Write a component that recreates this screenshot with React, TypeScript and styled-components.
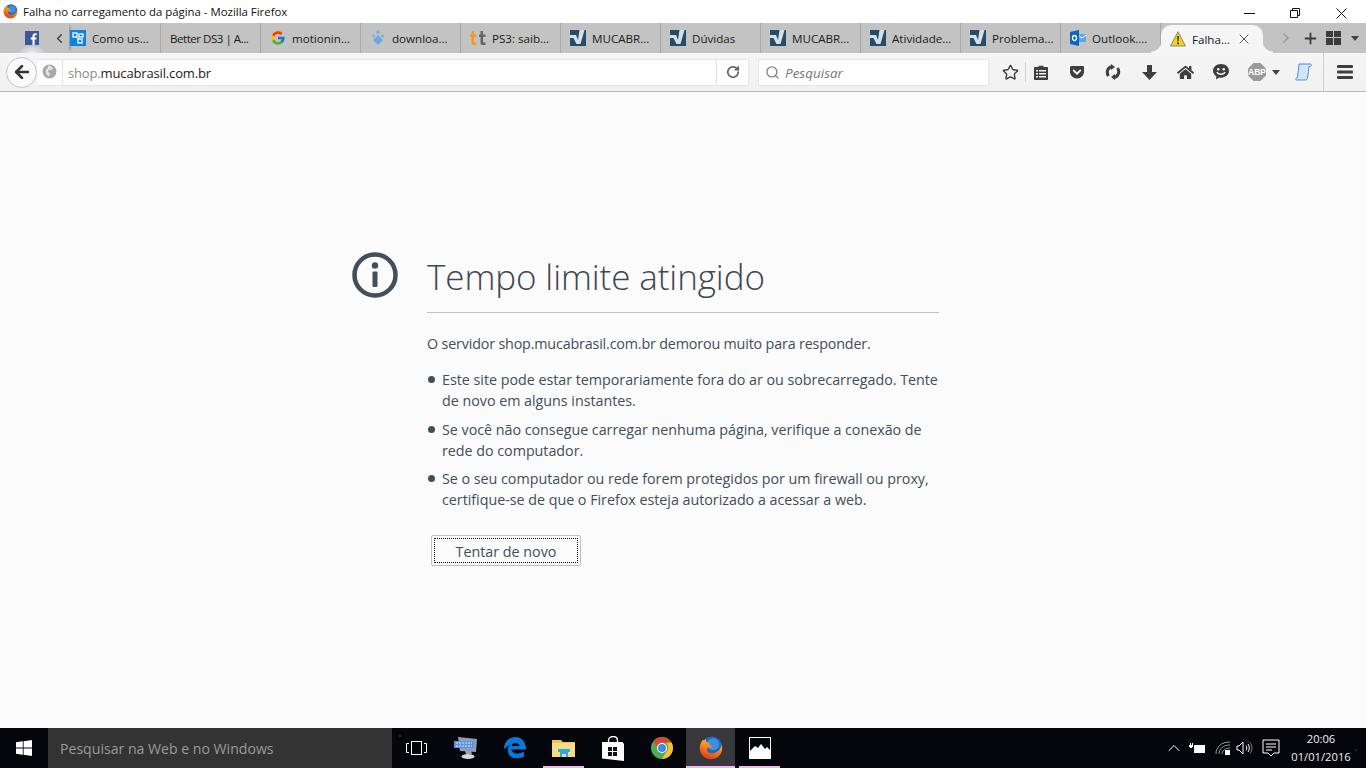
import React from "react";
import styled, { createGlobalStyle } from "styled-components";
import { ArrowLeft, ChevronLeft, ChevronRight, Plus, RotateCw, Search, Star, X, ChevronUp } from "lucide-react";
import { FcGoogle } from "react-icons/fc";
import { FaGetPocket, FaHome } from "react-icons/fa";

const Global = createGlobalStyle`
  html, body { margin: 0; padding: 0; height: 100%; overflow: hidden; }
  body { font-family: "Open Sans", "Noto Sans", sans-serif; color: #222; background: #fbfbfb; }
  #root { height: 100%; }
`;

const Page = styled.div`
  display: flex;
  flex-direction: column;
  height: 768px;
  width: 1366px;
`;

const TitleBar = styled.div`
  display: flex;
  align-items: center;
  height: 23px;
  background: #fff;
  padding-left: 3px;
  flex-shrink: 0;
`;

const TitleText = styled.span`
  margin-left: 5px;
  font-size: 11.4px;
  color: #111;
  flex: 1;
  white-space: nowrap;
`;

const WindowButtons = styled.div`
  display: flex;
  height: 23px;
  padding-top: 3px;
  padding-right: 2px;
  box-sizing: border-box;
`;

const WindowButton = styled.div`
  width: 46px;
  display: flex;
  align-items: center;
  justify-content: center;
`;

const TabStrip = styled.div`
  display: flex;
  align-items: stretch;
  height: 30px;
  background: #c3c3c3;
  flex-shrink: 0;
`;

const PinnedTab = styled.div`
  width: 50px;
  padding-left: 25px;
  box-sizing: border-box;
  display: flex;
  align-items: center;
  background: radial-gradient(ellipse 14px 8px at 32px 30px, #e8f0fb, transparent);
`;

const Chevron = styled.div`
  width: 19px;
  display: flex;
  align-items: center;
  justify-content: center;
  box-shadow: 3px 0 3px -3px #555;
  color: #444;
`;

const Tab = styled.div<{ $first?: boolean; $tight?: boolean }>`
  width: ${p => (p.$first ? "92px" : "100px")};
  box-sizing: border-box;
  display: flex;
  align-items: center;
  gap: 6px;
  padding-left: ${p => (p.$first ? "1px" : "9px")};
  font-size: 11.6px;
  letter-spacing: ${p => (p.$tight ? "-0.5px" : "0")};
  color: #1a1a1a;
  white-space: nowrap;
  border-right: 1px solid #a9a9a9;
`;

const ActiveTab = styled.div`
  width: 102px;
  margin-top: 2px;
  box-sizing: border-box;
  display: flex;
  align-items: center;
  gap: 6px;
  padding-left: 9px;
  font-size: 11.6px;
  color: #1a1a1a;
  white-space: nowrap;
  background: #f5f5f5;
  border-radius: 10px 10px 0 0;
  position: relative;
  &::before, &::after {
    content: "";
    position: absolute;
    bottom: 0;
    width: 10px;
    height: 12px;
  }
  &::before {
    left: -10px;
    background: radial-gradient(circle at 0 0, transparent 10px, #f5f5f5 11px);
  }
  &::after {
    right: -10px;
    background: radial-gradient(circle at 100% 0, transparent 10px, #f5f5f5 11px);
  }
`;

const TabIcon = styled.span`
  width: 16px;
  height: 16px;
  flex-shrink: 0;
  display: flex;
  align-items: center;
  justify-content: center;
`;

const TabClose = styled.span`
  position: absolute;
  right: 11px;
  top: 6px;
  display: flex;
`;

const StripActions = styled.div`
  display: flex;
  align-items: center;
  flex: 1;
`;

const StripChevron = styled.div`
  margin-left: 14px;
  width: 18px;
  display: flex;
  justify-content: center;
  color: #9b9b9b;
`;

const StripPlus = styled.div`
  width: 30px;
  display: flex;
  justify-content: center;
  color: #3c3c3c;
`;

const StripGroups = styled.div`
  margin-left: 1px;
  display: flex;
`;

const StripCaret = styled.div`
  margin-left: 10px;
  display: flex;
`;

const NavBar = styled.div`
  display: flex;
  align-items: center;
  height: 39px;
  padding-left: 6px;
  box-sizing: border-box;
  background: linear-gradient(#f5f5f5, #f1f1f1);
  border-bottom: 1px solid #bcbcbc;
  flex-shrink: 0;
`;

const BackButton = styled.div`
  width: 31px;
  height: 31px;
  box-sizing: border-box;
  border-radius: 50%;
  border: 1px solid #c4c4c4;
  background: #fafafa;
  display: flex;
  align-items: center;
  justify-content: center;
  position: relative;
  z-index: 1;
  flex-shrink: 0;
`;

const UrlBar = styled.div`
  display: flex;
  align-items: center;
  width: 712px;
  height: 27px;
  box-sizing: border-box;
  background: #fff;
  border: 1px solid #e6e6e6;
  border-left: 0;
  padding-left: 4px;
`;

const Globe = styled.span`
  width: 17px;
  height: 16px;
  margin-right: 4px;
  display: flex;
  justify-content: center;
`;

const UrlText = styled.div`
  flex: 1;
  border-left: 1px solid #e2e2e2;
  height: 25px;
  line-height: 26px;
  padding-left: 5px;
  font-size: 13px;
  letter-spacing: -0.15px;
  color: #222;
  span { color: #8a8a8a; }
`;

const Reload = styled.div`
  width: 31px;
  height: 25px;
  border-left: 1px solid #e2e2e2;
  display: flex;
  align-items: center;
  justify-content: center;
`;

const SearchBox = styled.div`
  display: flex;
  align-items: center;
  width: 231px;
  height: 27px;
  box-sizing: border-box;
  margin-left: 9px;
  background: #fff;
  border: 1px solid #e6e6e6;
  padding-left: 6px;
  gap: 5px;
  font-size: 13.5px;
  font-style: italic;
  color: #777;
`;

const SearchLabel = styled.span`
  position: relative;
  top: 1px;
`;

const ToolSlot = styled.div<{ $w?: number; $before?: number }>`
  width: ${p => p.$w ?? 36}px;
  margin-left: ${p => p.$before ?? 0}px;
  height: 24px;
  display: flex;
  align-items: center;
  justify-content: center;
  flex-shrink: 0;
`;

const ToolSep = styled.div<{ $h?: number; $before?: number }>`
  width: 1px;
  height: ${p => p.$h ?? 20}px;
  margin-left: ${p => p.$before ?? 0}px;
  background: #d0d0d0;
  flex-shrink: 0;
`;

const AbpSlot = styled(ToolSlot)`
  justify-content: flex-start;
  padding-left: 9px;
  gap: 6px;
  box-sizing: border-box;
`;

const Content = styled.main`
  flex: 1;
  background: #fbfbfb;
  color: #424e5a;
  display: flex;
  justify-content: center;
  padding-top: 159px;
  box-sizing: border-box;
`;

const ErrorBox = styled.div`
  width: 512px;
`;

const Heading = styled.div`
  display: flex;
  align-items: center;
  height: 61px;
  border-bottom: 1px solid #c1c1c1;
`;

const InfoSlot = styled.div`
  width: 75px;
  margin-left: -75px;
  margin-top: -9px;
  flex-shrink: 0;
`;

const Title = styled.h1`
  margin: -11px 0 0;
  font-weight: 300;
  font-size: 35px;
  letter-spacing: -0.1px;
  color: #3e4650;
  white-space: nowrap;
`;

const Lead = styled.p`
  margin: 20px 0 0;
  font-size: 14.3px;
  letter-spacing: -0.16px;
  line-height: 21px;
  white-space: nowrap;
`;

const Hints = styled.ul`
  list-style: none;
  margin: 15px 0 0;
  padding: 0;
`;

const Hint = styled.li`
  position: relative;
  padding-left: 15px;
  margin-bottom: 7px;
  font-size: 14.3px;
  letter-spacing: -0.02px;
  line-height: 21px;
  white-space: nowrap;
  &:first-child { margin-bottom: 8px; }
  &::before {
    content: "";
    position: absolute;
    left: 1px;
    top: 7px;
    width: 7px;
    height: 7px;
    border-radius: 50%;
    background: #424e5a;
  }
`;

const RetryButton = styled.button`
  display: block;
  margin: 25px 0 0 4px;
  width: 150px;
  height: 31px;
  box-sizing: border-box;
  padding: 2px;
  background: #fbfbfb;
  border: 1px solid #c1c1c1;
  border-radius: 2px;
  font-family: inherit;
  font-size: 14.3px;
  color: #424e5a;
`;

const RetryInner = styled.span`
  display: block;
  height: 100%;
  line-height: 26px;
  border: 1px dotted #111;
  box-sizing: border-box;
`;

const Taskbar = styled.footer`
  display: flex;
  align-items: stretch;
  height: 40px;
  background:
    radial-gradient(circle at 400px 8px, #2a2a34 0, transparent 2px),
    radial-gradient(circle at 1248px 14px, #2a2a34 0, transparent 2px),
    radial-gradient(circle at 1356px 22px, #2a2a34 0, transparent 2px),
    #05050c;
  color: #fff;
  flex-shrink: 0;
`;

const StartButton = styled.div`
  width: 48px;
  display: flex;
  align-items: center;
  justify-content: center;
`;

const TaskSearch = styled.div`
  width: 344px;
  background: #333;
  display: flex;
  align-items: center;
  padding-left: 12px;
  box-sizing: border-box;
  font-size: 14.1px;
  color: #9a9a9a;
`;

const TaskIcon = styled.div<{ $running?: boolean; $active?: boolean }>`
  width: 49px;
  display: flex;
  align-items: center;
  justify-content: center;
  position: relative;
  background: ${p => (p.$active ? "#38373c" : "transparent")};
  &::after {
    content: "";
    display: ${p => (p.$running ? "block" : "none")};
    position: absolute;
    bottom: 0;
    left: ${p => (p.$active ? 0 : 4)}px;
    right: ${p => (p.$active ? 0 : 4)}px;
    height: 2px;
    background: #eeb9ee;
  }
`;

const Tray = styled.div`
  margin-left: auto;
  display: flex;
  align-items: center;
`;

const TraySlot = styled.div<{ $w: number; $after?: number }>`
  width: ${p => p.$w}px;
  margin-right: ${p => p.$after ?? 0}px;
  display: flex;
  justify-content: center;
  align-items: center;
`;

const Clock = styled.div`
  width: 76px;
  text-align: center;
  font-size: 11.2px;
  line-height: 18px;
  color: #f0f0f0;
  margin-right: 7px;
`;

const FirefoxLogo = ({ size = 16, id }: { size?: number; id: string }) => (
  <svg width={size} height={size} viewBox="0 0 32 32">
    <defs>
      <linearGradient id={id} x1="0.7" y1="0" x2="0.3" y2="1">
        <stop offset="0" stopColor="#ffc92e" />
        <stop offset="0.45" stopColor="#f7871f" />
        <stop offset="1" stopColor="#d8391b" />
      </linearGradient>
    </defs>
    <circle cx="17" cy="14" r="13.500" fill="#2467b8" />
    <circle cx="19" cy="11" r="8" fill="#3d8fe0" />
    <path d="M5 5C2 9 1 13 1 16A15 15 0 0 0 31 16C31 14 30.500 12 30 11C29.500 18 24 23 17 23C11 23 9 18 12 15C14 16 17 16 18 14C15 13 13 12 14 9C11 9 9 8 9 4C7 6 6 6 5 5z" fill={`url(#${id})`} />
  </svg>
);

const FacebookIcon = () => (
  <svg width="14" height="14" viewBox="0 0 14 14">
    <rect width="14" height="14" fill="#3b5998" />
    <path d="M9.600 14V8.600h1.700l.3-2.100h-2V5.200c0-.6.200-1 1-1h1.100V2.300C11.500 2.300 10.900 2.200 10.200 2.200 8.600 2.200 7.500 3.200 7.500 5v1.500H5.700v2.100h1.800V14z" fill="#fff" />
  </svg>
);

const ShareIcon = () => (
  <svg width="16" height="16" viewBox="0 0 16 16">
    <rect width="16" height="16" fill="#0a84e0" />
    <rect x="3" y="3" width="4" height="4" fill="none" stroke="#fff" strokeWidth="1.300" />
    <rect x="9" y="4" width="4" height="3" fill="none" stroke="#fff" strokeWidth="1.300" />
    <rect x="8" y="9" width="4" height="4" fill="none" stroke="#fff" strokeWidth="1.300" />
    <path d="M6 7l3 2" stroke="#fff" />
  </svg>
);

const DownloadDiamond = () => (
  <svg width="16" height="16" viewBox="0 0 16 16" fill="#6aa9e6">
    <path d="M8 0l2 2-2 2-2-2z" />
    <path d="M3.500 4l2 2-2 2-2-2zM12.500 4l2 2-2 2-2-2z" opacity=".7" />
    <path d="M8 5l5 5-5 5-5-5z" />
  </svg>
);

const TLogo = () => (
  <svg width="16" height="16" viewBox="0 0 16 16">
    <path d="M1.500 1h2.500v3.500H6.500V7H4v4.500c0 .8.500 1 1 1h1.500V15H3.500C2.300 15 1.500 14 1.500 13V7H0V4.500h1.500z" fill="#f59a1b" />
    <path d="M10.500 1H13v3.500h2.500V7H13v4.500c0 .8.500 1 1 1h1.500V15h-3c-1.200 0-2-1-2-2V7H9V4.500h1.500z" fill="#666" />
  </svg>
);

const MucaLogo = () => (
  <svg width="16" height="16" viewBox="0 0 16 16">
    <rect width="16" height="16" fill="#234d69" />
    <path d="M0 5H6L8 10L9.500 0H14.500L10.500 14H6.500L3.500 8H0z" fill="#d5dfe5" />
  </svg>
);

const OutlookLogo = () => (
  <svg width="16" height="16" viewBox="0 0 16 16">
    <rect x="7" y="4" width="9" height="8" fill="#5ea5e0" />
    <path d="M8 5l4 3 4-3" fill="none" stroke="#fff" strokeWidth="1" />
    <path d="M0 2l9-2v16l-9-2z" fill="#0a66c2" />
    <ellipse cx="4.500" cy="8" rx="2" ry="2.500" fill="none" stroke="#fff" strokeWidth="1.300" />
  </svg>
);

const WarningIcon = () => (
  <svg width="16" height="16" viewBox="0 0 16 16">
    <path d="M8 .8L15.500 15H.5z" fill="#f2cf2e" stroke="#8a8a6a" strokeWidth="1" strokeLinejoin="round" />
    <path d="M7.200 5h1.600l-.3 5.500h-1z" fill="#222" />
    <rect x="7.200" y="11.500" width="1.600" height="1.800" fill="#222" />
  </svg>
);

const GroupsIcon = () => (
  <svg width="15" height="14" viewBox="0 0 15 14" fill="#3c3c3c">
    <rect x="0" y="0" width="7" height="6" />
    <rect x="8" y="0" width="7" height="6" />
    <rect x="0" y="7" width="7" height="7" />
    <rect x="8" y="7" width="7" height="7" />
  </svg>
);

const Caret = ({ color = "#444" }: { color?: string }) => (
  <svg width="8" height="5" viewBox="0 0 8 5"><path d="M0 0h8L4 5z" fill={color} /></svg>
);

const GlobeIcon = () => (
  <svg width="15" height="15" viewBox="0 0 15 15">
    <circle cx="7.500" cy="7.500" r="7" fill="#a8a8a8" />
    <path d="M6 1.500c2 0 4 1 5 3l-2 2-2-1-1 2 2 2-1 3C4 11 3 8 4 6 5 5 6 4 6 1.500z" fill="#e2e2e2" />
  </svg>
);

const ClipboardIcon = () => (
  <svg width="14" height="15" viewBox="0 0 14 15" fill="#3e3e3e">
    <path d="M4.500 2V.8h5V2H13c.6 0 1 .4 1 1v11c0 .6-.4 1-1 1H1c-.6 0-1-.4-1-1V3c0-.6.4-1 1-1z" />
    <path d="M2 5h2v1.500H2zM5 5h7v1.500H5zM2 8h2v1.500H2zM5 8h7v1.500H5zM2 11h2v1.500H2zM5 11h7v1.500H5z" fill="#f3f3f3" />
  </svg>
);

const SyncIcon = () => (
  <svg width="16" height="16" viewBox="0 0 16 16" fill="none" stroke="#3e3e3e" strokeWidth="3">
    <path d="M3.500 12C1 8.500 2.500 3.500 7 2.500" />
    <path d="M12.500 4c2.500 3.500 1 8.500-3.500 9.500" />
    <path d="M6 0l4 3-4 3z" fill="#3e3e3e" stroke="none" />
    <path d="M10 16l-4-3 4-3z" fill="#3e3e3e" stroke="none" />
  </svg>
);

const DownloadArrow = () => (
  <svg width="15" height="15" viewBox="0 0 15 15">
    <path d="M5 0h5v7h5l-7.500 8L0 7h5z" fill="#3e3e3e" />
  </svg>
);

const SmileIcon = () => (
  <svg width="16" height="16" viewBox="0 0 16 16">
    <path d="M8 0c4.400 0 8 2.900 8 6.800s-3.600 6.900-8 6.900c-.6 0-1.200 0-1.800-.2L3 15.500l.3-3.200C1.200 11 0 9 0 6.800 0 2.900 3.600 0 8 0z" fill="#3e3e3e" />
    <circle cx="5.300" cy="5.300" r="1.300" fill="#f3f3f3" />
    <circle cx="10.700" cy="5.300" r="1.300" fill="#f3f3f3" />
    <path d="M4 8c1 3 7 3 8 0" stroke="#f3f3f3" strokeWidth="1.300" fill="none" />
  </svg>
);

const AbpIcon = () => (
  <svg width="18" height="18" viewBox="0 0 18 18">
    <path d="M5.500 0h7L18 5.500v7L12.500 18h-7L0 12.500v-7z" fill="#9a9a9a" />
    <text x="9" y="12" textAnchor="middle" fontSize="8.500" fontWeight="700" fill="#fff" fontFamily="Liberation Sans, sans-serif">ABP</text>
  </svg>
);

const ScrollIcon = () => (
  <svg width="17" height="18" viewBox="0 0 17 18">
    <path d="M4 1h11.500c1 0 1.300 1.500 0 2.500H14L12.500 15c-.2 1.300-1 2-2 2H1.500c-1 0-1-1.500.2-2.500H2.500z" fill="#d3e5f8" stroke="#4d8fd6" strokeWidth="1" strokeLinejoin="round" />
  </svg>
);

const MenuIcon = () => (
  <svg width="16" height="14" viewBox="0 0 16 14" fill="#3e3e3e">
    <rect width="16" height="3" rx="1" />
    <rect y="5.500" width="16" height="3" rx="1" />
    <rect y="11" width="16" height="3" rx="1" />
  </svg>
);

const InfoIcon = () => (
  <svg width="46" height="46" viewBox="0 0 46 46">
    <circle cx="23" cy="23" r="20.500" fill="none" stroke="#434f5c" strokeWidth="4.500" />
    <circle cx="23" cy="13.500" r="3.200" fill="#434f5c" />
    <rect x="20.500" y="19.500" width="5" height="15.500" rx="1" fill="#434f5c" />
  </svg>
);

const WindowsLogo = () => (
  <svg width="16" height="16" viewBox="0 0 16 16" fill="#fff">
    <path d="M0 2.300l6.800-1v6.300H0zM7.600 1.200L16 0v7.600H7.600zM0 8.400h6.800v6.300l-6.800-1zM7.600 8.400H16V16l-8.400-1.200z" />
  </svg>
);

const TaskViewIcon = () => (
  <svg width="21" height="14" viewBox="0 0 21 14" fill="none" stroke="#fff" strokeWidth="1">
    <rect x="5.500" y=".5" width="10" height="13" />
    <path d="M3 2.500H.5v9H3M18 2.500h2.500v9H18" />
  </svg>
);

const NetworkPcIcon = () => (
  <svg width="24" height="24" viewBox="0 0 24 24">
    <path d="M4 1l19 2-1 13-16-1z" fill="#8ea0b8" />
    <path d="M0 5h20v7H0z" fill="#5b93dc" />
    <path d="M2 7h16M2 10h16" stroke="#dcebfb" strokeWidth="1.200" strokeDasharray="2 1" />
    <path d="M11 15h6l1 3h-6z" fill="#9aa2ab" />
    <ellipse cx="14" cy="20.500" rx="6.500" ry="2.500" fill="#d5d8dc" />
  </svg>
);

const EdgeLogo = () => (
  <svg width="22" height="22" viewBox="0 0 22 22">
    <path d="M0 12C0 5 5 0 11.500 0 18 0 22 5 22 12.500H7.500c.3 4 6.500 5.500 12.500 2.200v5c-7 3.500-17 1.500-16-7-.5-2.500 1.500-5.500 4-7-3 2-5 4-8 6.300zM7.500 9h8C15.500 5 8 5 7.500 9z" fill="#0a78d7" />
  </svg>
);

const ExplorerIcon = () => (
  <svg width="24" height="20" viewBox="0 0 24 20">
    <path d="M0 2h9l2 2h12v15H0z" fill="#e8c35e" />
    <path d="M0 5h23v14H0z" fill="#f6dc83" />
    <path d="M8 19v-5h8v5h-2v-3h-4v3z" fill="#2aa8e4" />
    <path d="M6 11h12v3H6z" fill="#2aa8e4" />
  </svg>
);

const StoreIcon = () => (
  <svg width="22" height="25" viewBox="0 0 22 25">
    <path d="M6.500 6V4.500C6.500 2 8.500.5 11 .5s4.500 1.500 4.500 4V6" fill="none" stroke="#fff" strokeWidth="1.300" />
    <path d="M0 6h20.500l1.500 2v17L0 22.500z" fill="#fff" />
    <path d="M6 11h4v4H6zM11 11h4v4h-4zM6 16h4v4H6zM11 16h4v4h-4z" fill="#111" />
  </svg>
);

const ChromeLogo = () => (
  <svg width="22" height="22" viewBox="0 0 22 22">
    <circle cx="11" cy="11" r="11" fill="#4caf50" />
    <path d="M11 0a11 11 0 0 1 9.500 5.500H11a5.500 5.500 0 0 0-5.200 3.700L2.200 4.500A11 11 0 0 1 11 0z" fill="#db4437" />
    <path d="M20.500 5.500A11 11 0 0 1 11 22l4.500-7.500A5.500 5.500 0 0 0 15 6z" fill="#fbc02d" />
    <circle cx="11" cy="11" r="5" fill="#fff" />
    <circle cx="11" cy="11" r="4" fill="#4a86e8" />
  </svg>
);

const PhotosIcon = () => (
  <svg width="22" height="22" viewBox="0 0 22 22">
    <rect x=".5" y=".5" width="21" height="21" fill="#05050c" stroke="#fff" />
    <path d="M0 22v-7l6-6 3 2 3-4 4 5 2-2 4 4v8z" fill="#fff" />
  </svg>
);

const BatteryIcon = () => (
  <svg width="16" height="12" viewBox="0 0 16 12" fill="#fff">
    <rect x="5" y="3" width="11" height="8" />
    <path d="M0 3h4v2H3v1H1V5H0zM1 1h1v2H1zM3 1h1v2H3z" />
  </svg>
);

const WifiIcon = () => (
  <svg width="16" height="14" viewBox="0 0 16 14" fill="none" stroke="#9a9a9a" strokeWidth="1">
    <path d="M1 13C1 6 6 1 15 1M4 13c0-5 4-9 11-9M7 13c0-3 3-6 8-6" />
    <path d="M10 9h5v5h-5z" fill="#fff" stroke="none" />
  </svg>
);

const SpeakerIcon = () => (
  <svg width="17" height="14" viewBox="0 0 17 14" fill="none" stroke="#fff" strokeWidth="1">
    <path d="M1 5h2l4-4v12L3 9H1z" />
    <path d="M10 4.500c1 1.500 1 3.500 0 5M12 3c1.800 2.500 1.800 5.500 0 8" />
    <path d="M14 1.500c2.500 3 2.500 8 0 11" stroke="#888" />
  </svg>
);

const NotifyIcon = () => (
  <svg width="18" height="19" viewBox="0 0 18 19" fill="none" stroke="#fff" strokeWidth="1">
    <path d="M1 1h16v13h-5l-3 3-3-3H1z" />
    <path d="M4 5h10M4 8h10M4 11h6" />
  </svg>
);

const tabs: { label: string; icon: React.ReactNode }[] = [
  { label: "motionin...", icon: <FcGoogle size={16} /> },
  { label: "downloa...", icon: <DownloadDiamond /> },
  { label: "PS3: saib...", icon: <TLogo /> },
  { label: "MUCABR...", icon: <MucaLogo /> },
  { label: "Dúvidas", icon: <MucaLogo /> },
  { label: "MUCABR...", icon: <MucaLogo /> },
  { label: "Atividade...", icon: <MucaLogo /> },
  { label: "Problema...", icon: <MucaLogo /> },
  { label: "Outlook....", icon: <OutlookLogo /> },
];

export default function App() {
  return (
    <Page>
      <Global />
      <TitleBar>
        <FirefoxLogo id="ffTitle" size={15} />
        <TitleText>Falha no carregamento da página - Mozilla Firefox</TitleText>
        <WindowButtons>
          <WindowButton>
            <svg width="11" height="1"><rect width="11" height="1" fill="#111" /></svg>
          </WindowButton>
          <WindowButton>
            <svg width="10" height="10" fill="none" stroke="#111"><path d="M.5 2.500h7v7h-7zM2.500 2.500v-2h7v7h-2" /></svg>
          </WindowButton>
          <WindowButton>
            <svg width="11" height="11" stroke="#111"><path d="M.5.500l10 10M10.500.500l-10 10" /></svg>
          </WindowButton>
        </WindowButtons>
      </TitleBar>

      <TabStrip>
        <PinnedTab><FacebookIcon /></PinnedTab>
        <Chevron><ChevronLeft size={15} strokeWidth={2.5} /></Chevron>
        <Tab $first>
          <TabIcon><ShareIcon /></TabIcon>
          Como us...
        </Tab>
        <Tab $tight>Better DS3 | A...</Tab>
        {tabs.map((t, i) => (
          <Tab key={i}>
            <TabIcon>{t.icon}</TabIcon>
            {t.label}
          </Tab>
        ))}
        <ActiveTab>
          <TabIcon><WarningIcon /></TabIcon>
          Falha...
          <TabClose><X size={16} strokeWidth={1.2} color="#333" /></TabClose>
        </ActiveTab>
        <StripActions>
          <StripChevron><ChevronRight size={16} strokeWidth={2.2} /></StripChevron>
          <StripPlus><Plus size={17} strokeWidth={2.6} /></StripPlus>
          <StripGroups><GroupsIcon /></StripGroups>
          <StripCaret><Caret /></StripCaret>
        </StripActions>
      </TabStrip>

      <NavBar>
        <BackButton><ArrowLeft size={20} strokeWidth={3.2} color="#333" /></BackButton>
        <UrlBar>
          <Globe><GlobeIcon /></Globe>
          <UrlText><span>shop.</span>mucabrasil.com.br</UrlText>
          <Reload><RotateCw size={14} strokeWidth={3} color="#666" /></Reload>
        </UrlBar>
        <SearchBox>
          <Search size={15} strokeWidth={2.2} color="#888" />
          <SearchLabel>Pesquisar</SearchLabel>
        </SearchBox>
        <ToolSlot $w={30} $before={6}><Star size={17} strokeWidth={2} color="#3e3e3e" /></ToolSlot>
        <ToolSep />
        <ToolSlot $w={30}><ClipboardIcon /></ToolSlot>
        <ToolSlot $before={3}><FaGetPocket size={16} color="#3e3e3e" /></ToolSlot>
        <ToolSlot><SyncIcon /></ToolSlot>
        <ToolSlot><DownloadArrow /></ToolSlot>
        <ToolSlot><FaHome size={17} color="#3e3e3e" /></ToolSlot>
        <ToolSlot><SmileIcon /></ToolSlot>
        <AbpSlot $w={46}>
          <AbpIcon />
          <Caret />
        </AbpSlot>
        <ToolSlot><ScrollIcon /></ToolSlot>
        <ToolSep $h={38} $before={2} />
        <ToolSlot $w={42}><MenuIcon /></ToolSlot>
      </NavBar>

      <Content>
        <ErrorBox>
          <Heading>
            <InfoSlot><InfoIcon /></InfoSlot>
            <Title>Tempo limite atingido</Title>
          </Heading>
          <Lead>O servidor shop.mucabrasil.com.br demorou muito para responder.</Lead>
          <Hints>
            <Hint>Este site pode estar temporariamente fora do ar ou sobrecarregado. Tente<br />de novo em alguns instantes.</Hint>
            <Hint>Se você não consegue carregar nenhuma página, verifique a conexão de<br />rede do computador.</Hint>
            <Hint>Se o seu computador ou rede forem protegidos por um firewall ou proxy,<br />certifique-se de que o Firefox esteja autorizado a acessar a web.</Hint>
          </Hints>
          <RetryButton><RetryInner>Tentar de novo</RetryInner></RetryButton>
        </ErrorBox>
      </Content>

      <Taskbar>
        <StartButton><WindowsLogo /></StartButton>
        <TaskSearch>Pesquisar na Web e no Windows</TaskSearch>
        <TaskIcon><TaskViewIcon /></TaskIcon>
        <TaskIcon><NetworkPcIcon /></TaskIcon>
        <TaskIcon><EdgeLogo /></TaskIcon>
        <TaskIcon $running><ExplorerIcon /></TaskIcon>
        <TaskIcon><StoreIcon /></TaskIcon>
        <TaskIcon><ChromeLogo /></TaskIcon>
        <TaskIcon $running $active><FirefoxLogo id="ffTask" size={24} /></TaskIcon>
        <TaskIcon $running><PhotosIcon /></TaskIcon>
        <Tray>
          <TraySlot $w={20} $after={3}><ChevronUp size={22} strokeWidth={1.2} color="#fff" /></TraySlot>
          <TraySlot $w={20} $after={6}><BatteryIcon /></TraySlot>
          <TraySlot $w={20}><WifiIcon /></TraySlot>
          <TraySlot $w={22} $after={4}><SpeakerIcon /></TraySlot>
          <TraySlot $w={24}><NotifyIcon /></TraySlot>
          <Clock>20:06<br />01/01/2016</Clock>
        </Tray>
      </Taskbar>
    </Page>
  );
}
